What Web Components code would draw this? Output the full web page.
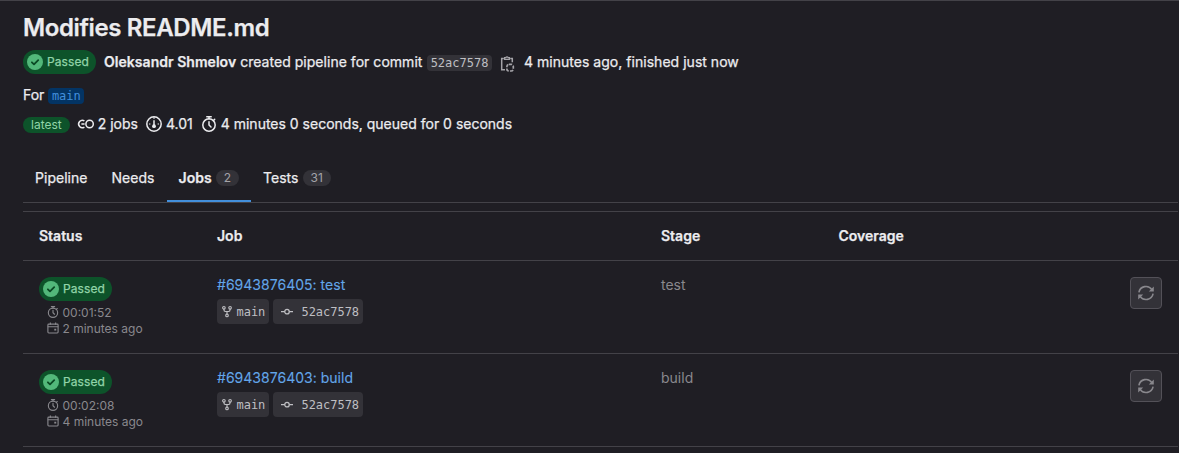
<!DOCTYPE html>
<html lang="en">
<head>
<meta charset="utf-8">
<title>Pipeline jobs</title>
<style>
html,body{margin:0;height:453px;overflow:hidden;background:#1f1e24}
body{font-family:Inter,"Liberation Sans",sans-serif;font-size:14px;color:#ececef;-webkit-text-stroke:.25px}
</style>
</head>
<body>
<pipeline-page></pipeline-page>
<script>
const S = 'fill="none" stroke="currentColor" stroke-width="1.5"';
const ICONS = {
  check: `<circle cx="8" cy="8" r="8" fill="#52b87a"/><path d="M4.9 8.3l2.1 2.1 4.2-4.2" fill="none" stroke="#0a4a24" stroke-width="1.8" stroke-linecap="round" stroke-linejoin="round"/>`,
  pipeline: `<g ${S}><circle cx="11.6" cy="8" r="3.7"/><path d="M6.4 4.9a3.7 3.7 0 1 0 0 6.2M3.4 8h3.2"/></g>`,
  gauge: `<g ${S}><circle cx="8" cy="8" r="7.2"/><path d="M8 4.2v5"/></g><circle cx="8" cy="10.2" r="1.9" fill="currentColor"/><path d="M8 1v2M3 8h1.4M11.6 8H13" stroke="currentColor"/>`,
  timer: `<g ${S}><circle cx="8" cy="9" r="6.2"/><path d="M8 5.8V9l2 2M5.8.8h4.4M8 1v2M12.3 4.7l1.4-1.4" stroke-linecap="round"/></g>`,
  calendar: `<g ${S}><rect x="1.2" y="2.8" width="13.6" height="11.8" rx="1.2"/><path d="M1 6.3h14M4.5 .8v3M11.5 .8v3"/></g><rect x="9.7" y="9" width="2.6" height="2.4" fill="currentColor"/>`,
  branch: `<g ${S}><circle cx="3.9" cy="2.4" r="1.7"/><circle cx="12.1" cy="2.4" r="1.7"/><circle cx="8" cy="12.6" r="1.7"/><path d="M3.9 4.1v.9c0 1.6 1 2.3 2 2.3h4.2c1 0 2-.7 2-2.3v-.9M8 7.3v3.5"/></g>`,
  commit: `<g fill="none" stroke="currentColor" stroke-width="1.7"><circle cx="8" cy="7.5" r="3"/><path d="M0 7.5h5M11 7.5h5"/></g>`,
  copy: `<g ${S}><path d="M4.8 2.5H2.7v11.2H6M11.2 2.5h2.1v3.7"/><path d="M5.6 3.4V1.7h1.2a1.3 1.3 0 0 1 2.4 0h1.2v1.7z" stroke-width="1.2"/><rect x="7.9" y="8.4" width="6.4" height="6.6" rx="2" stroke-dasharray="3.2 1.2" stroke-width="1.7"/></g>`,
  retry: `<g fill="none" stroke="currentColor" stroke-width="1.6"><path d="M.9 7.3A7.2 7.2 0 0 1 13.9 4.6M15.1 8.7A7.2 7.2 0 0 1 2.1 11.4"/></g><path d="M15.8 1.6v5H10.8zM.2 14.4V9.4h5z" fill="currentColor"/>`
};
function define(name, css, html) {
  customElements.define(name, class extends HTMLElement {
    constructor() {
      super();
      const t = document.createElement('template');
      t.innerHTML = `<style>${css}</style>${typeof html === 'function' ? html(this) : html}`;
      this.attachShadow({mode: 'open'}).append(t.content.cloneNode(true));
    }
  });
}
define('gl-icon', `:host{display:block;flex:none;width:var(--size,16px);height:var(--size,16px)}svg{display:block;width:100%;height:100%;overflow:visible}`,
  el => `<svg viewBox="0 0 16 16">${ICONS[el.getAttribute('name')]}</svg>`);
define('status-badge', `:host{display:flex;box-sizing:border-box;width:73px;height:24px;align-items:center;gap:4px;padding-left:4px;border-radius:12px;background:#0d532a;color:#91d4a8;font-size:12px;letter-spacing:.1px}`,
  `<gl-icon name="check"></gl-icon><span><slot></slot></span>`);
define('gl-pill', `:host{display:block;box-sizing:border-box;height:16px;line-height:16px;padding:0 8px;border-radius:8px;background:#333238;color:#a4a3a8;font-size:12px;-webkit-text-stroke:0}:host([green]){background:#0d532a;color:#91d4a8}`, `<slot></slot>`);
define('ref-chip', `:host{display:block;box-sizing:border-box;height:16px;line-height:16px;padding:0 3.5px;border-radius:4px;background:#333238;color:#bfbfc3;font-family:"DejaVu Sans Mono",monospace;font-size:12px;-webkit-text-stroke:0}:host([blue]){background:#033464;color:#428fdc}`, `<slot></slot>`);
define('job-ref', `:host{display:flex;box-sizing:border-box;height:25px;align-items:center;padding:0 3.5px 0 4px;border-radius:4px;background:#333238;color:#bfbfc3;font-family:"DejaVu Sans Mono",monospace;font-size:12px;letter-spacing:-.03px;--size:12px;-webkit-text-stroke:0}gl-icon{margin:0 3.5px 0 0}:host([wide]) gl-icon{margin:0 8.7px 0 4px}`,
  el => `<gl-icon name="${el.getAttribute('icon')}"></gl-icon><span><slot></slot></span>`);
define('gl-tab', `:host{display:flex;box-sizing:border-box;height:41px;padding:0 12px;align-items:flex-start;line-height:33px;letter-spacing:.03px;gap:4px}:host([active]){font-weight:600;border-bottom:2px solid #428fdc}gl-pill{margin-top:9px;font-weight:400;letter-spacing:0}`,
  el => `<span><slot></slot></span>${el.hasAttribute('count') ? `<gl-pill>${el.getAttribute('count')}</gl-pill>` : ''}`);
define('retry-button', `:host{display:flex;box-sizing:border-box;width:32px;height:32px;align-items:center;justify-content:center;border:1px solid #535158;border-radius:4px;background:#333238;color:#89888d}`, `<gl-icon name="retry"></gl-icon>`);
define('job-row', `:host{display:grid;grid-template-columns:178px 444px 177.5px 1fr 48px;box-sizing:border-box;height:93px;padding:16px 0 0 16px;border-bottom:1px solid #434248}
.meta{display:flex;align-items:center;height:16px;gap:3.5px;padding-left:8px;font-size:12px;color:#89888d;--size:12px;-webkit-text-stroke:0}.meta span{position:relative;top:.5px}
status-badge{margin-bottom:3px}.link{color:#63a6e9;line-height:16px;height:17px;margin-bottom:5px;letter-spacing:.02px;-webkit-text-stroke:.1px}.refs{display:flex;gap:4px}.stage{color:#89888d;line-height:16px;-webkit-text-stroke:0}`,
  el => {const a = n => el.getAttribute(n); return `<div><status-badge>Passed</status-badge><div class="meta"><gl-icon name="timer"></gl-icon><span>${a('duration')}</span></div><div class="meta"><gl-icon name="calendar"></gl-icon><span>${a('finished')}</span></div></div>
<div><div class="link">#${a('job')}: ${a('stage')}</div><div class="refs"><job-ref icon="branch">main</job-ref><job-ref icon="commit" wide>52ac7578</job-ref></div></div>
<div class="stage">${a('stage')}</div><div></div><retry-button></retry-button>`});
define('pipeline-page', `:host{display:block;box-sizing:border-box;height:453px;padding:9px 1px 0 23px;border-top:1px solid #434248;line-height:20px}
h1{margin:0;font-size:24px;font-weight:600;line-height:36px;letter-spacing:-.38px;height:40px}
.row{display:flex;align-items:center}
.info{height:24px}b{font-weight:600;margin:0 4px 0 8px;letter-spacing:.04px}.info span{letter-spacing:.03px}.info ref-chip{margin:1px 7.5px 0 4.7px}.info gl-icon{margin:3px 8.5px 0 0;color:#a4a3a8}
.for{height:20px;margin-top:11px;gap:4px}.for ref-chip{position:relative;top:1px}
.stats{height:20px;margin-top:9px;gap:4px}.stats gl-pill{margin:1px 4px 0 0}.stats span{margin-right:4px}
.tabs{display:flex;height:41px;margin-top:27px;border-bottom:1px solid #434248}
.head{display:grid;grid-template-columns:178px 444px 177.5px 1fr;height:48px;line-height:48px;margin-top:8px;padding-left:16px;border-top:1px solid #434248;border-bottom:1px solid #434248;font-weight:600}`,
`<h1>Modifies README.md</h1>
<div class="row info"><status-badge>Passed</status-badge><b>Oleksandr Shmelov</b><span>created pipeline for commit</span><ref-chip>52ac7578</ref-chip><gl-icon name="copy"></gl-icon><span>4 minutes ago, finished just now</span></div>
<div class="row for"><span>For</span><ref-chip blue>main</ref-chip></div>
<div class="row stats"><gl-pill green>latest</gl-pill><gl-icon name="pipeline"></gl-icon><span>2 jobs</span><gl-icon name="gauge"></gl-icon><span>4.01</span><gl-icon name="timer"></gl-icon><span>4 minutes 0 seconds, queued for 0 seconds</span></div>
<div class="tabs"><gl-tab>Pipeline</gl-tab><gl-tab>Needs</gl-tab><gl-tab active count="2">Jobs</gl-tab><gl-tab count="31">Tests</gl-tab></div>
<div class="head"><span>Status</span><span>Job</span><span>Stage</span><span>Coverage</span></div>
<job-row job="6943876405" stage="test" duration="00:01:52" finished="2 minutes ago"></job-row>
<job-row job="6943876403" stage="build" duration="00:02:08" finished="4 minutes ago"></job-row>`);
</script>
</body>
</html>
